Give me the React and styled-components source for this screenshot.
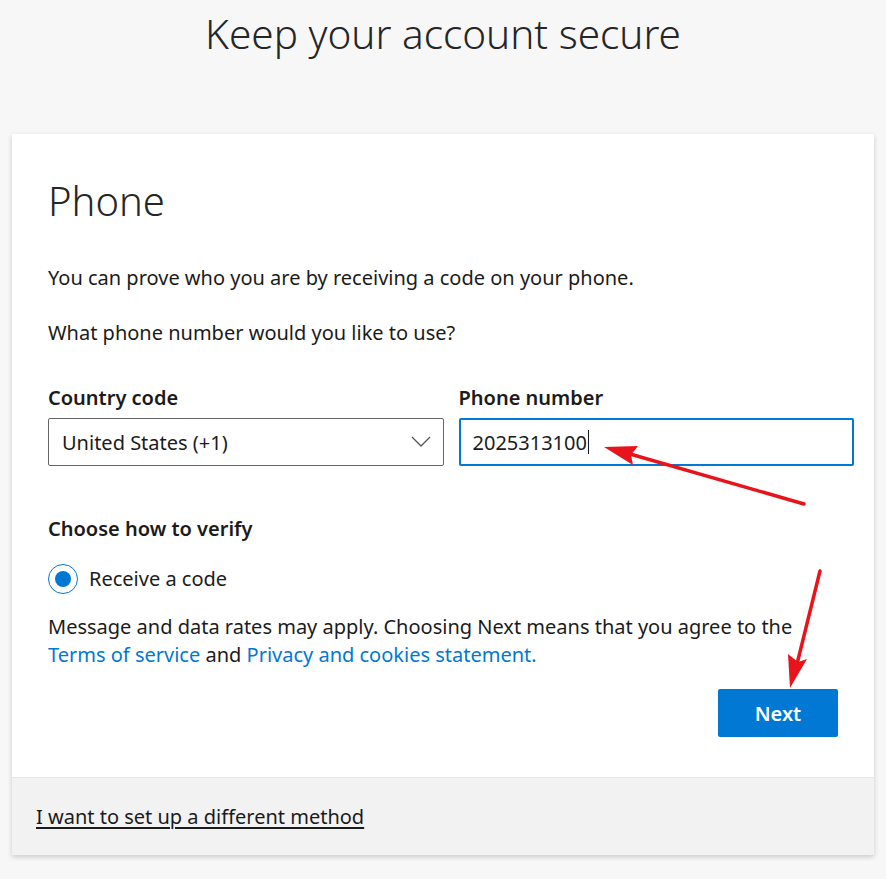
import React from 'react';
import styled, {createGlobalStyle} from 'styled-components';

const GlobalStyle = createGlobalStyle`
  html, body {
    margin: 0;
    padding: 0;
    background: #f7f7f7;
  }
  body {
    font-family: "Noto Sans", "Open Sans", sans-serif;
    color: #1b1b1b;
  }
`;

const Page = styled.div`
  position: relative;
  width: 886px;
  height: 879px;
  overflow: hidden;
`;

const Header = styled.header`
  height: 134px;
  display: flex;
  justify-content: center;
`;

const Title = styled.h1`
  margin: 7px 0 0;
  font-size: 40.5px;
  font-weight: 300;
  line-height: 54px;
  color: #262626;
`;

const Card = styled.section`
  margin: 0 12px;
  background: #fff;
  box-shadow: 0 2px 5px rgba(0, 0, 0, 0.18);
`;

const Body = styled.div`
  padding: 36px 20px 40px 36px;
`;

const Heading = styled.h2`
  margin: 0 0 32px;
  font-size: 40px;
  font-weight: 300;
  line-height: 62px;
  color: #262626;
`;

const Text = styled.p`
  margin: 0 0 ${p => p.gap || 0}px;
  font-size: 20px;
  line-height: 28px;
`;

const Fields = styled.div`
  display: grid;
  grid-template-columns: 1fr 1fr;
  gap: 15px;
  margin-top: 37px;
`;

const Field = styled.div`
  display: flex;
  flex-direction: column;
  gap: 6px;
`;

const Label = styled.label`
  font-size: 20px;
  font-weight: 600;
  line-height: 28px;
`;

const Select = styled.div`
  height: 48px;
  box-sizing: border-box;
  border: 1px solid #666;
  border-radius: 2px;
  display: flex;
  align-items: center;
  justify-content: space-between;
  padding: 0 12px 0 13px;
  font-size: 20px;
`;

const Input = styled.div`
  height: 48px;
  box-sizing: border-box;
  border: 2px solid #0078d4;
  border-radius: 2px;
  display: flex;
  align-items: center;
  padding: 0 12px;
  font-size: 20px;
`;

const Caret = styled.span`
  width: 1px;
  height: 24px;
  background: #1b1b1b;
  margin-left: 1px;
`;

const Section = styled.div`
  margin-top: 49px;
`;

const Radio = styled.div`
  display: flex;
  align-items: center;
  gap: 11px;
  margin: 21px 0 19px;
  font-size: 20px;
  line-height: 28px;
`;

const RadioCircle = styled.span`
  width: 30px;
  height: 30px;
  box-sizing: border-box;
  border-radius: 50%;
  border: 1px solid #0078d4;
  display: flex;
  align-items: center;
  justify-content: center;
  &::after {
    content: '';
    width: 16px;
    height: 16px;
    border-radius: 50%;
    background: #0078d4;
  }
`;

const Link = styled.a`
  color: #0078d4;
  text-decoration: none;
`;

const Actions = styled.div`
  display: flex;
  justify-content: flex-end;
  margin-top: 20px;
  padding-right: 16px;
`;

const Button = styled.button`
  width: 120px;
  height: 48px;
  border: none;
  border-radius: 2px;
  background: #0078d4;
  color: #fff;
  font-family: inherit;
  font-size: 20px;
  font-weight: 600;
`;

const Footer = styled.div`
  background: #f2f2f2;
  border-top: 1px solid #e6e6e6;
  height: 77px;
  display: flex;
  align-items: center;
  padding: 0 24px;
`;

const FooterLink = styled.a`
  color: #1b1b1b;
  font-size: 20px;
  text-decoration: underline;
  text-underline-offset: 3px;
`;

const Arrows = styled.svg`
  position: absolute;
  left: 0;
  top: 0;
  pointer-events: none;
`;

export default function App() {
  return (
    <Page>
      <GlobalStyle/>
      <Header>
        <Title>Keep your account secure</Title>
      </Header>
      <Card>
        <Body>
          <Heading>Phone</Heading>
          <Text gap={27}>You can prove who you are by receiving a code on your phone.</Text>
          <Text>What phone number would you like to use?</Text>
          <Fields>
            <Field>
              <Label>Country code</Label>
              <Select>
                <span>United States (+1)</span>
                <svg width="20" height="12" viewBox="0 0 20 12" fill="none">
                  <path d="M1 1l9 9 9-9" stroke="#555" strokeWidth="1.3"/>
                </svg>
              </Select>
            </Field>
            <Field>
              <Label>Phone number</Label>
              <Input>2025313100<Caret/></Input>
            </Field>
          </Fields>
          <Section>
            <Label>Choose how to verify</Label>
            <Radio>
              <RadioCircle/>
              <span>Receive a code</span>
            </Radio>
            <Text>
              Message and data rates may apply. Choosing Next means that you agree to the<br/>
              <Link href="#">Terms of service</Link> and <Link href="#">Privacy and cookies statement.</Link>
            </Text>
          </Section>
          <Actions>
            <Button>Next</Button>
          </Actions>
        </Body>
        <Footer>
          <FooterLink href="#">I want to set up a different method</FooterLink>
        </Footer>
      </Card>
      <Arrows width="886" height="879" viewBox="0 0 886 879">
        <line x1="804" y1="504" x2="630" y2="454" stroke="#e8141b" strokeWidth="3.5" strokeLinecap="round"/>
        <path d="M604 447 L638 446 L631 455 L633 465 Z" fill="#e8141b"/>
        <line x1="820" y1="571" x2="797" y2="664" stroke="#e8141b" strokeWidth="3.5" strokeLinecap="round"/>
        <path d="M790 688 L807 659 L798 662 L788 654 Z" fill="#e8141b"/>
      </Arrows>
    </Page>
  );
}
